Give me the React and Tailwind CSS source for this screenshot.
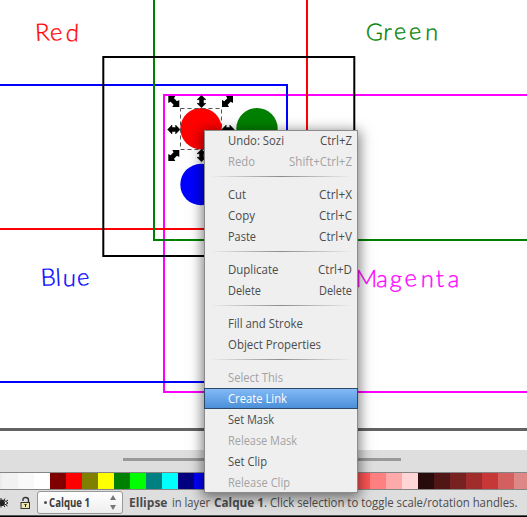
const SWATCHES = [
  '#f2f2f2', '#f9f9f9', '#ffffff', '#800000', '#ff0000', '#808000', '#ffff00', '#008000', '#00ff00',
  '#008080', '#00ffff', '#000080', '#0000ff', '#800080', '#ff00ff', '#2b0000', '#550000', '#800000',
  '#aa0000', '#d40000', '#ff0000', '#ff2a2a', '#ff5555', '#ff8080', '#ffaaaa', '#ffd5d5', '#280b0b',
  '#501616', '#782121', '#a02c2c', '#c83737', '#d35f5f', '#de8787',
];

const MENU = [
  { label: 'Undo: Sozi', w: 56, key: 'Ctrl+Z', kw: 32 },
  { label: 'Redo', w: 27, key: 'Shift+Ctrl+Z', kw: 63, off: true },
  null,
  { label: 'Cut', w: 18, key: 'Ctrl+X', kw: 33 },
  { label: 'Copy', w: 27, key: 'Ctrl+C', kw: 33 },
  { label: 'Paste', w: 28, key: 'Ctrl+V', kw: 33 },
  null,
  { label: 'Duplicate', w: 50.5, key: 'Ctrl+D', kw: 34 },
  { label: 'Delete', w: 33, key: 'Delete', kw: 33 },
  null,
  { label: 'Fill and Stroke', w: 75 },
  { label: 'Object Properties', w: 93 },
  null,
  { label: 'Select This', w: 55, off: true },
  { label: 'Create Link', w: 59, active: true },
  { label: 'Set Mask', w: 46 },
  { label: 'Release Mask', w: 69, off: true },
  { label: 'Set Clip', w: 39 },
  { label: 'Release Clip', w: 62, off: true },
];

function Fit({ w, children, bold }) {
  return (
    <svg width={w} height="21" className="block shrink-0 overflow-visible" fill="currentColor">
      <text x="0" y="15" textLength={w} lengthAdjust="spacingAndGlyphs" fontSize="12.6" fontWeight={bold ? 700 : 400}>
        {children}
      </text>
    </svg>
  );
}

function Arrow({ x, y, angle }) {
  return (
    <path
      transform={`translate(${x} ${y}) rotate(${angle})`}
      d="M-6.2 0 L-1.8 -4.5 V-2 H1.8 V-4.5 L6.2 0 L1.8 4.5 V2 H-1.8 V4.5 Z"
      stroke="#000"
      strokeWidth="0.5"
    />
  );
}

function CornerArrow({ x, y, flip }) {
  return (
    <path
      transform={`translate(${x} ${y}) scale(${flip ? -1 : 1} 1)`}
      d="M-5.500 -5.500 H1.500 L0.200 -3.200 L3.200 -0.200 L5.500 -1.500 V5.500 H-1.500 L-0.200 3.200 L-3.200 0.200 L-5.500 1.500 Z"
    />
  );
}

function Drawing() {
  return (
    <svg width="527" height="450" className="block bg-white">
      <g fill="none" strokeWidth="2">
        <path d="M164 393 V95 H527 M164 392 H527" stroke="#f0f" />
        <path d="M0 85 H287 V382 H0" stroke="#00f" />
        <path d="M307 0 V229 H0" stroke="#f00" />
        <path d="M154 0 V240 H527" stroke="#008000" />
        <rect x="103.3" y="57" width="251" height="199" stroke="#000" />
      </g>
      <g fontFamily="Lato" fontWeight="300" strokeWidth="0.35">
        <text x="35.5 50.5 65.5" y="41 41 41" rotate="-3 -5 2" fontSize="24" fill="#f00" stroke="#f00">Red</text>
        <text x="365.500 383 394.500 409.500 425" y="40" rotate="2 3 -5 -5 2" fontSize="23.500" fill="#008000" stroke="#008000">Green</text>
        <text x="41 56 62.500 77.500" y="286" rotate="-3 -3 2 -5" fontSize="24" fill="#00f" stroke="#00f">Blue</text>
        <text x="355.500 376 389.500 405 420.500 436 447.500" y="287" rotate="0 2 3 -5 2 -2 2" fontSize="24" fill="#f0f" stroke="#f0f">Magenta</text>
      </g>
      <circle cx="201" cy="128.700" r="20.700" fill="#f00" />
      <circle cx="257" cy="128.700" r="20.700" fill="#008000" />
      <circle cx="201" cy="184.500" r="20.700" fill="#00f" />
      <rect x="180.500" y="108.500" width="41" height="41" fill="none" stroke="#555" strokeDasharray="4 3" />
      <CornerArrow x={173.8} y={101.5} />
      <Arrow x={201.500} y={101.500} angle={90} />
      <CornerArrow x={227.500} y={101.500} flip />
      <Arrow x={173.800} y={129.500} angle={0} />
      <Arrow x={228} y={129.500} angle={0} />
      <CornerArrow x={173.800} y={155.500} flip />
      <Arrow x={201.500} y={155.500} angle={90} />
      <CornerArrow x={227.500} y={155.500} />
      <path d="M0 429.500 H527" stroke="#646264" strokeWidth="3" />
    </svg>
  );
}

function ContextMenu() {
  return (
    <div className="absolute left-[204px] top-[130px] h-[363px] w-[154px] border border-[#8b8b8b] bg-[#efefef] text-[#4c4c4c] shadow-[0_3px_12px_2px_rgba(0,0,0,0.5)]">
      <div className="-mx-px -mt-px flex flex-col">
        {MENU.map((item, i) =>
          item ? (
            <div
              key={i}
              className={
                'flex h-[21px] justify-between pr-1.5 ' +
                (item.active
                  ? 'border border-[#2b4a69] bg-linear-to-b from-[#83b9f5] to-[#4a90d9] pl-[23px] text-white'
                  : item.off
                    ? 'pl-6 text-[#a3a3a3]'
                    : 'pl-6')
              }
            >
              <div className={item.active ? '-mt-px' : ''}>
                <Fit w={item.w}>{item.label}</Fit>
              </div>
              {item.key && <Fit w={item.kw}>{item.key}</Fit>}
            </div>
          ) : (
            <div key={i} className="h-3 px-1.5 pt-1">
              <div className="h-px bg-linear-to-r from-transparent via-[#8c8c8c] to-transparent" />
            </div>
          ),
        )}
      </div>
    </div>
  );
}

function EyeIcon() {
  return (
    <svg width="9" height="14" viewBox="0 0 9 14" className="shrink-0" fill="none" stroke="#222">
      <path d="M-5 7 Q2 1 8 7 Q2 12 -5 7Z" fill="#eee" />
      <circle cx="2" cy="7" r="2.500" fill="#222" />
      <path d="M1 4V2 M4 4L5 2.500 M6 5.500L8 4 M1 10V11.500 M4 10L5 11 M6 9L7.500 10" />
    </svg>
  );
}

function LockIcon() {
  return (
    <svg width="11" height="14" viewBox="0 0 11 14" className="shrink-0" fill="none">
      <path d="M3 5V3.500Q3 1.500 5.500 1.500Q8.500 1.500 8.500 4V7" stroke="#333" strokeWidth="1.400" />
      <rect x="1" y="6.500" width="8.500" height="6" fill="#eee8ae" stroke="#333" />
      <path d="M4.500 8.500H6.500M5.500 8.500V11" stroke="#222" />
    </svg>
  );
}

export default function App() {
  return (
    <div className="relative flex h-[517px] w-[527px] flex-col overflow-hidden bg-[#dedede] font-['Open_Sans','Noto_Sans',sans-serif] text-[12px]">
      <Drawing />
      <div className="h-[22px] pl-[123px] pt-2">
        <div className="h-[3px] w-[278px] bg-[#999]" />
      </div>
      <div className="flex h-[18px] shrink-0 border-y border-[#858585] bg-[#ececec] pl-0.5">
        {SWATCHES.map((color, i) => (
          <div key={i} className="h-4 w-4 shrink-0" style={{ backgroundColor: color }} />
        ))}
      </div>
      <div className="flex h-[25px] items-center text-[#4c4c4c]">
        <EyeIcon />
        <div className="ml-[11px]">
          <LockIcon />
        </div>
        <div className="ml-1.5 flex h-[23px] w-[86px] items-center rounded-[3px] border border-[#989898] bg-linear-to-b from-white to-[#eeeeee] pl-1.5 text-[#3c3c3c]">
          <div className="h-[3px] w-[3px] rounded-full bg-[#4c4c4c]" />
          <div className="ml-0.5"><Fit w={41} bold>Calque 1</Fit></div>
          <svg width="6" height="15" viewBox="0 0 6 15" className="ml-5 shrink-0" fill="#777">
            <path d="M0 5L3 0L6 5ZM0 10H6L3 15Z" />
          </svg>
        </div>
        <div className="ml-[6px] flex">
          <Fit w={38.5} bold>Ellipse</Fit>
          <div className="ml-1"><Fit w={38}>in layer</Fit></div>
          <div className="ml-1"><Fit w={50} bold>Calque 1</Fit></div>
          <Fit w={253.5}>. Click selection to toggle scale/rotation handles.</Fit>
        </div>
      </div>
      <div className="h-0.5 border-t border-[#555] bg-black" />
      <ContextMenu />
    </div>
  );
}
